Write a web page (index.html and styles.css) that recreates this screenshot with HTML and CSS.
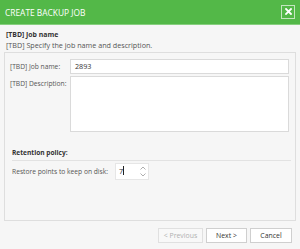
FILE: index.html
```html
<!DOCTYPE html>
<html>
<head>
<meta charset="utf-8">
<title>Create backup job</title>
<link rel="stylesheet" href="styles.css">
</head>
<body>
<div class="dialog">
  <div class="dialog__header">
    <span class="dialog__title">CREATE BACKUP JOB</span>
    <span class="dialog__close">
      <svg width="7" height="7" viewBox="0 0 7 7"><path d="M1 1 L6 6 M6 1 L1 6" stroke="#fff" stroke-width="1.8" stroke-linecap="square"/></svg>
    </span>
  </div>
  <div class="dialog__body">
    <div class="intro">
      <div class="intro__title">[TBD] Job name</div>
      <div class="intro__text">[TBD] Specify the job name and description.</div>
    </div>
    <div class="panel">
      <div class="field">
        <label class="field__label">[TBD] Job name:</label>
        <div class="field__input">2893</div>
      </div>
      <div class="field field--tall">
        <label class="field__label">[TBD] Description:</label>
        <div class="field__input field__input--area"></div>
      </div>
      <div class="section">
        <div class="section__title">Retention policy:</div>
        <div class="field field--spin">
          <label class="field__label field__label--wide">Restore points to keep on disk:</label>
          <div class="spinner">
            <span class="spinner__value">7<span class="caret"></span></span>
            <span class="spinner__arrows">
              <svg width="6" height="4" viewBox="0 0 6 4"><path d="M0.5 3.5 L3 1 L5.5 3.5" fill="none" stroke="#999" stroke-width="0.8"/></svg>
              <svg width="6" height="4" viewBox="0 0 6 4"><path d="M0.5 0.5 L3 3 L5.5 0.5" fill="none" stroke="#999" stroke-width="0.8"/></svg>
            </span>
          </div>
        </div>
      </div>
    </div>
    <div class="footer">
      <button class="btn btn--prev" disabled>&lt; Previous</button>
      <button class="btn btn--next">Next &gt;</button>
      <button class="btn btn--cancel">Cancel</button>
    </div>
  </div>
</div>
</body>
</html>
```

FILE: styles.css
```css
*,
*::before,
*::after {
  box-sizing: border-box;
}

html, body {
  margin: 0;
  padding: 0;
}

body {
  font-family: "Open Sans", "Noto Sans", sans-serif;
  font-size: 7.2px;
  color: #444;
  background: #f6f6f6;
}

.dialog {
  width: 300px;
  height: 249px;
  background: #f6f6f6;
}

.dialog__header {
  height: 25px;
  background: #53b848;
  border-bottom: 1px solid #86cf7e;
  display: flex;
  align-items: center;
  justify-content: space-between;
  padding: 0 5px 0 5px;
}

.dialog__title {
  color: #fff;
  font-size: 8.4px;
}

.dialog__close {
  width: 14px;
  height: 14px;
  margin-top: -1px;
  border: 1px solid rgba(255, 255, 255, 0.65);
  display: flex;
  align-items: center;
  justify-content: center;
}

.dialog__close svg {
  display: block;
}

.dialog__body {
  padding: 0 4px;
}

.intro {
  padding: 5px 2px 0 2px;
  height: 27px;
}

.intro__title {
  font-weight: bold;
  font-size: 6.9px;
  color: #333;
  line-height: 10px;
}

.intro__text {
  color: #555;
  line-height: 10px;
}

.panel {
  height: 169px;
  border: 1px solid #dedede;
  padding: 6px 6px 0 5px;
}

.field {
  display: flex;
  align-items: flex-start;
  margin-bottom: 2px;
}

.field__label {
  width: 60px;
  flex: none;
  font-size: 6.7px;
  color: #555;
  line-height: 15px;
  white-space: nowrap;
}

.field__label--wide {
  width: 103px;
  line-height: 17px;
}

.field__input {
  flex: 1;
  height: 15px;
  background: #fff;
  border: 1px solid #dadada;
  padding: 0 4px;
  line-height: 13px;
  color: #333;
}

.field__input--area {
  height: 56px;
}

.section {
  margin-top: 13px;
  padding-left: 2px;
}

.section__title {
  font-weight: bold;
  font-size: 6.6px;
  color: #333;
  line-height: 15px;
  border-bottom: 1px solid #e2e2e2;
  margin-right: -2px;
  margin-bottom: 2px;
}

.spinner {
  width: 34px;
  height: 17px;
  background: #fff;
  border: 1px solid #e6e6e6;
  display: flex;
}

.spinner__value {
  flex: 1;
  padding-left: 3px;
  line-height: 15px;
  color: #333;
}

.caret {
  display: inline-block;
  width: 1px;
  height: 9px;
  background: #222;
  vertical-align: -1px;
}

.spinner__arrows {
  width: 11px;
  display: flex;
  flex-direction: column;
  align-items: center;
  justify-content: center;
  gap: 3px;
}

.spinner__arrows svg {
  display: block;
}

.footer {
  display: flex;
  justify-content: flex-end;
  gap: 3px;
  margin-top: 7px;
  padding-right: 4px;
}

.btn {
  font-family: "Open Sans", "Noto Sans", sans-serif;
  font-size: 6.9px;
  height: 15px;
  padding: 0;
  background: #fff;
  border: 1px solid #cfcfcf;
  color: #333;
  line-height: 13px;
}

.btn--prev {
  width: 45px;
  color: #b0b0b0;
  background: #f8f8f8;
  border-color: #e0e0e0;
}

.btn--next {
  width: 41px;
}

.btn--cancel {
  width: 42px;
}
```
